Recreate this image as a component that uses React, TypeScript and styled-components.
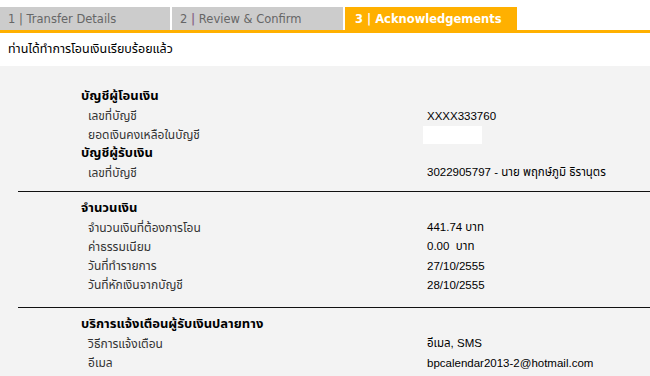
import React from "react";
import styled, { createGlobalStyle } from "styled-components";

const GlobalStyle = createGlobalStyle`
  html, body {
    margin: 0;
    padding: 0;
    background: #fff;
    overflow: hidden;
  }
`;

const thai = `Tahoma, "Noto Sans Thai", "Noto Sans", "DejaVu Sans", sans-serif`;

const Page = styled.div`
  width: 650px;
  height: 376px;
  overflow: hidden;
  background: #fff;
`;

const TabBar = styled.div`
  display: flex;
  gap: 2px;
  padding-top: 7px;
  border-bottom: 3px solid #ffb000;
`;

const Tab = styled.div<{ $active?: boolean; $w: number }>`
  width: ${(p) => p.$w}px;
  height: 23px;
  box-sizing: border-box;
  padding-left: ${(p) => (p.$active ? 10 : 8)}px;
  display: flex;
  align-items: center;
  background: ${(p) => (p.$active ? "#ffb000" : "#cccccc")};
  color: ${(p) => (p.$active ? "#fff" : "#666")};
  font-family: "DejaVu Sans", Verdana, sans-serif;
  font-size: 11.5px;
  font-weight: ${(p) => (p.$active ? "bold" : "normal")};
  white-space: pre;
`;

const Bar = styled.span<{ $purple?: boolean }>`
  color: ${(p) => (p.$purple ? "#8a6a8a" : "inherit")};
  font-weight: ${(p) => (p.$purple ? "bold" : "inherit")};
`;

const Message = styled.div`
  height: 33px;
  display: flex;
  align-items: center;
  padding-left: 8px;
  font-family: ${thai};
  font-size: 12.5px;
  color: #000;
`;

const Panel = styled.div`
  background: #f3f3f3;
  padding-top: 21px;
`;

const Section = styled.div<{ $divider?: boolean; $pad: number }>`
  margin-left: 18px;
  padding-left: 63px;
  padding-bottom: ${(p) => p.$pad}px;
  margin-bottom: 7px;
  border-bottom: ${(p) => (p.$divider ? "1px solid #111" : "none")};
`;

const Heading = styled.div`
  font-family: ${thai};
  font-size: 13px;
  font-weight: bold;
  color: #000;
  height: 19px;
  line-height: 19px;
`;

const Row = styled.div`
  display: grid;
  grid-template-columns: 339px 1fr;
  padding-left: 7px;
  height: 19px;
  align-items: center;
`;

const Label = styled.div`
  font-family: ${thai};
  font-size: 12px;
  color: #333;
`;

const Value = styled.div`
  font-family: "Liberation Sans", Arial, ${thai};
  font-size: 11.5px;
  color: #000;
  white-space: pre;
`;

const Blank = styled.div`
  width: 59px;
  height: 18px;
  background: #fff;
  margin-left: -4px;
`;

const App: React.FC = () => {
  return (
    <Page>
      <GlobalStyle />
      <TabBar>
        <Tab $w={170}>
          1 <Bar>|</Bar> Transfer Details
        </Tab>
        <Tab $w={171}>
          2 <Bar $purple>|</Bar> Review &amp; Confirm
        </Tab>
        <Tab $w={172} $active>
          3 <Bar>|</Bar> Acknowledgements
        </Tab>
      </TabBar>
      <Message>ท่านได้ทำการโอนเงินเรียบร้อยแล้ว</Message>
      <Panel>
        <Section $divider $pad={9}>
          <Heading>บัญชีผู้โอนเงิน</Heading>
          <Row>
            <Label>เลขที่บัญชี</Label>
            <Value>XXXX333760</Value>
          </Row>
          <Row>
            <Label>ยอดเงินคงเหลือในบัญชี</Label>
            <Blank />
          </Row>
          <Heading>บัญชีผู้รับเงิน</Heading>
          <Row>
            <Label>เลขที่บัญชี</Label>
            <Value>3022905797 - นาย พฤกษ์ภูมิ ธิรานุตร</Value>
          </Row>
        </Section>
        <Section $divider $pad={13}>
          <Heading>จำนวนเงิน</Heading>
          <Row>
            <Label>จำนวนเงินที่ต้องการโอน</Label>
            <Value>441.74 บาท</Value>
          </Row>
          <Row>
            <Label>ค่าธรรมเนียม</Label>
            <Value>0.00  บาท</Value>
          </Row>
          <Row>
            <Label>วันที่ทำรายการ</Label>
            <Value>27/10/2555</Value>
          </Row>
          <Row>
            <Label>วันที่หักเงินจากบัญชี</Label>
            <Value>28/10/2555</Value>
          </Row>
        </Section>
        <Section $pad={10}>
          <Heading>บริการแจ้งเตือนผู้รับเงินปลายทาง</Heading>
          <Row>
            <Label>วิธีการแจ้งเตือน</Label>
            <Value>อีเมล, SMS</Value>
          </Row>
          <Row>
            <Label>อีเมล</Label>
            <Value>bpcalendar2013-2@hotmail.com</Value>
          </Row>
          <Row>
            <Label>หมายเลขโทรศัพท์มือถือ</Label>
            <Value>08XXXXXXXX</Value>
          </Row>
        </Section>
      </Panel>
    </Page>
  );
};

export default App;
